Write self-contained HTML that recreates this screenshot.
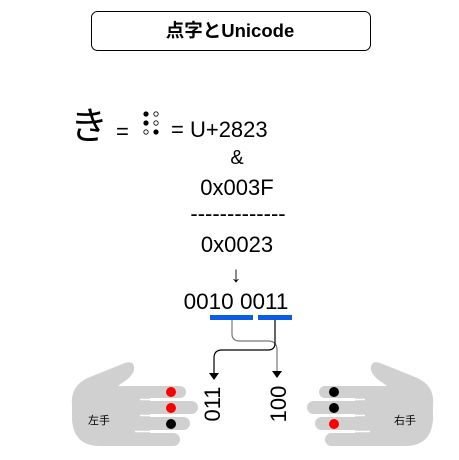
<!DOCTYPE html>
<html><head><meta charset="utf-8"><style>
html,body{margin:0;padding:0;background:#fff;width:459px;height:460px;overflow:hidden}
svg{display:block}
text{font-family:"Liberation Sans","Noto Sans CJK JP",sans-serif;fill:#000}
</style></head><body>
<svg width="459" height="460" viewBox="0 0 459 460" xmlns="http://www.w3.org/2000/svg">
<rect x="91.5" y="11.5" width="279" height="39" rx="6" fill="#fff" stroke="#000" stroke-width="1"/>
<text x="230" y="37" font-size="18.5" font-weight="bold" text-anchor="middle">点字とUnicode</text>

<text x="70" y="139" font-size="38">き</text>
<text x="116" y="139" font-size="22">=</text>
<g stroke="#000" stroke-width="0.8">
<circle cx="146" cy="114" r="2.2" fill="#000"/><circle cx="156" cy="114" r="2.2" fill="#fff"/>
<circle cx="146" cy="123" r="2.2" fill="#000"/><circle cx="156" cy="123" r="2.2" fill="#fff"/>
<circle cx="146" cy="132" r="2.2" fill="#fff"/><circle cx="156" cy="132" r="2.2" fill="#000"/>
</g>
<text x="171" y="137" font-size="22">= U+2823</text>
<text x="237" y="164" font-size="20" text-anchor="middle">&amp;</text>
<text x="237" y="195" font-size="22" text-anchor="middle">0x003F</text>
<text x="238" y="221" font-size="22" text-anchor="middle">-------------</text>
<text x="237" y="252" font-size="22" text-anchor="middle">0x0023</text>
<text x="236" y="282" font-size="22" text-anchor="middle">↓</text>
<text x="236" y="309" font-size="22.5" text-anchor="middle">0010 0011</text>

<rect x="210" y="315" width="43" height="5" fill="#0a5ce6"/>
<rect x="258" y="315" width="34" height="5" fill="#0a5ce6"/>
<path d="M232,320 V334 Q232,341 240,341 H268 Q277,341 277,350 V372" fill="none" stroke="#777" stroke-width="1.2"/>
<path d="M275,320 V343 Q275,350 268,350 H222 Q214,350 214,358 V374" fill="none" stroke="#000" stroke-width="1.2"/>
<path d="M209,373 L214,380 L219,373 Z" fill="#000"/>
<path d="M272,371 L277,378 L282,371 Z" fill="#000"/>

<text transform="translate(220,404) rotate(-90)" font-size="22" text-anchor="middle">011</text>
<text transform="translate(286,404) rotate(-90)" font-size="22" text-anchor="middle">100</text>

<g id="lh" fill="#d0d0d0">
<path d="M72,405 Q70,385 90,377 L125,363 Q135,360 134,370 Q132,377 122,383 L118,386 L150,387 V446 H100 Q74,446 72,420 Z"/>
<rect x="118" y="386" width="68" height="12" rx="6"/>
<rect x="135" y="401" width="63" height="13" rx="6.5"/>
<rect x="135" y="417" width="55" height="13" rx="6.5"/>
<rect x="118" y="433" width="62" height="13" rx="6.5"/>
<path d="M140,399.5 H175 M140,415.5 H175 M135,431.5 H170" stroke="#fff" stroke-width="1.5"/>
</g>
<use href="#lh" transform="translate(505,0) scale(-1,1)"/>
<circle cx="171" cy="392" r="5" fill="#f00"/>
<circle cx="171" cy="408" r="5" fill="#f00"/>
<circle cx="171" cy="424" r="5" fill="#000"/>
<circle cx="334" cy="392" r="5" fill="#000"/>
<circle cx="334" cy="408" r="5" fill="#000"/>
<circle cx="334" cy="424" r="5" fill="#f00"/>
<text x="99" y="424" font-size="11" text-anchor="middle">左手</text>
<text x="405" y="424" font-size="11" text-anchor="middle">右手</text>
</svg>
</body></html>
